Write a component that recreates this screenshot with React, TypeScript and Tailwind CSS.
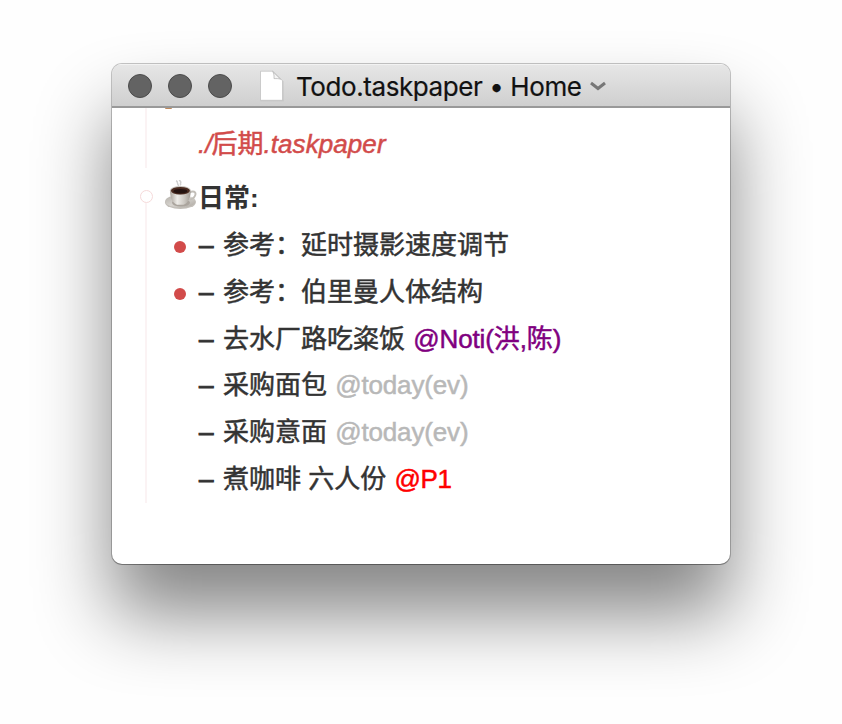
import type { ReactNode } from "react";

function TrafficLight() {
  return <span className="size-6 rounded-full border border-[#4b4b4b] bg-[#636363]" />;
}

function DocumentIcon() {
  return (
    <svg className="ml-[27px] h-8 w-[26px] shrink-0" viewBox="0 0 26 32">
      <path d="M1.5 1.5h12.3l10.7 9.2v20h-23z" fill="#b5b5b5" opacity=".55" transform="translate(0 .6)" />
      <path d="M1.5 1.2h12.3l9.7 9.5v19.6h-22z" fill="#fff" stroke="#c3c3c3" strokeWidth=".8" />
      <path d="M13.6 1.4c1.500 2 1.600 5 1.400 7.200 2.700 0 4.700-.1 6.500.600z" fill="#f4f4f4" stroke="#b8b8b8" strokeWidth=".8" />
    </svg>
  );
}

function CoffeeIcon() {
  return (
    <svg className="h-9 w-[34px] shrink-0" viewBox="0 0 34 36">
      <defs>
        <linearGradient id="cup" x1="0" x2="1">
          <stop offset="0" stopColor="#a9a39b" />
          <stop offset=".35" stopColor="#eeece8" />
          <stop offset=".7" stopColor="#cbc7c1" />
          <stop offset="1" stopColor="#a19b94" />
        </linearGradient>
        <linearGradient id="saucer" x1="0" y1="0" x2="1" y2="1">
          <stop offset="0" stopColor="#b0aca6" />
          <stop offset=".5" stopColor="#d8d5d0" />
          <stop offset="1" stopColor="#aaa59e" />
        </linearGradient>
      </defs>
      <path d="M12 .8c3 1 0 3 3 5M15 .2c4 2 0 3 2 5" fill="none" stroke="#d0d0d0" strokeWidth="1.500" />
      <ellipse cx="16.4" cy="22.4" rx="15.4" ry="6.6" fill="#c3bfb9" />
      <ellipse cx="16.4" cy="21.2" rx="15.2" ry="6.4" fill="url(#saucer)" />
      <ellipse cx="17" cy="22.800" rx="9" ry="3.800" fill="#aaa49d" />
      <path d="M25.5 12.200c6-2 7 1 5.200 4.200-1.400 2.500-4 3.400-6.600 3.200" fill="none" stroke="#c2beb8" strokeWidth="1.900" />
      <path d="M6 10.500c0 8 3 13 7 14.200h6.500C24 23.500 26.800 17.500 26.800 10.500z" fill="url(#cup)" />
      <ellipse cx="16.400" cy="10.300" rx="10.400" ry="4.400" fill="#c9c4be" />
      <ellipse cx="16.400" cy="10.700" rx="9.500" ry="3.800" fill="#4a2b20" />
      <ellipse cx="16.400" cy="11.200" rx="7" ry="2.300" fill="#241310" />
    </svg>
  );
}

function Task({ marked = false, children }: { marked?: boolean; children: ReactNode }) {
  return (
    <li className="flex h-[46.8px] items-center whitespace-pre">
      <span className="flex w-[35px] shrink-0 pl-[10px]">
        {marked && <span className="mt-1 size-3 rounded-full bg-[#d24b4a]" />}
      </span>
      <span>
        <span className="mr-[2.3px] [-webkit-text-stroke:1px]">– </span>
        {children}
      </span>
    </li>
  );
}

function EveningTag() {
  return <span className="ml-px tracking-[-0.16px] text-[#b8b8b8]">@today(ev)</span>;
}

export default function App() {
  return (
    <main className="h-[724px] w-[842px] overflow-hidden bg-[#fefefe] pt-16 pl-28">
      <section className="flex h-[500px] w-[618px] flex-col overflow-hidden rounded-[10px] bg-white shadow-[0_0_0_1px_rgba(0,0,0,0.22),0_1px_0_0_rgba(0,0,0,0.2),0_50px_76px_rgba(0,0,0,0.48)]">
        <header className="flex h-11 shrink-0 items-center border-t border-b-2 border-t-[#f2f2f2] border-b-[#999999] bg-linear-to-b from-[#e6e6e6] to-[#cfcfcf] pl-4">
          <div className="flex gap-4">
            <TrafficLight />
            <TrafficLight />
            <TrafficLight />
          </div>
          <DocumentIcon />
          <h1 className="ml-[11px] pt-[2px] font-[Inter,sans-serif] text-[26px] leading-8 tracking-[-0.42px] whitespace-pre text-[#111111] [-webkit-text-stroke:0.2px]">
            Todo.taskpaper • Home
          </h1>
          <svg className="ml-[7px] h-3 w-5" viewBox="0 0 20 12">
            <path d="m3 3 7 5.500 7-5.500" fill="none" stroke="#777" strokeWidth="3" />
          </svg>
        </header>
        <div className="flex flex-1 font-['Liberation_Sans','Noto_Sans_CJK_SC',sans-serif] text-[26px] leading-[46px] text-[#333333] [-webkit-text-stroke:0.5px]">
          <div className="flex w-[52px] flex-col items-center pl-4">
            <span className="h-[60px] w-[2px] bg-[#fbf3f4]" />
            <span className="mt-[22px] size-[13px] shrink-0 rounded-full border border-[#f6dada]" />
            <span className="h-[300px] w-[2px] bg-[#fbf3f4]" />
          </div>
          <div className="flex-1">
            <div className="flex h-[66px] flex-col">
              <span className="ml-px h-px w-[7px] rounded-b-full bg-[#c08a5c]" />
              <p className="mt-[12px] pl-[34px] tracking-[0.08px] text-[#d24b4a] italic">
                ./<span className="-ml-px tracking-[-0.1px] not-italic">后期</span>.taskpaper
              </p>
            </div>
            <h2 className="flex h-[48px] items-center font-bold [-webkit-text-stroke:0px]">
              <CoffeeIcon />
              日常:
            </h2>
            <ul className="-mt-[0.3px]">
              <Task marked>参考：延时摄影速度调节</Task>
              <Task marked>参考：伯里曼人体结构</Task>
              <Task>
                去水厂路吃粢饭 <span className="ml-px tracking-[-0.12px] text-[#800080]">@Noti(洪,陈)</span>
              </Task>
              <Task>
                采购面包 <EveningTag />
              </Task>
              <Task>
                采购意面 <EveningTag />
              </Task>
              <Task>
                煮咖啡 六人份 <span className="ml-px tracking-[-0.3px] text-[#ff0000]">@P1</span>
              </Task>
            </ul>
          </div>
        </div>
      </section>
    </main>
  );
}
